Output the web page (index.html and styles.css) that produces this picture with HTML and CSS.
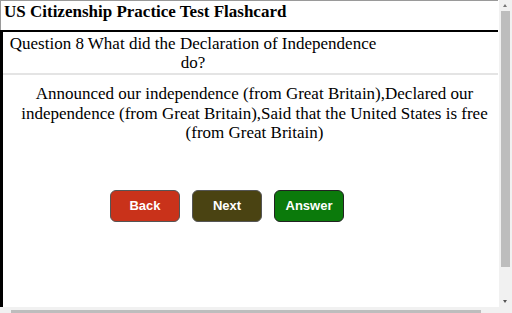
FILE: index.html
```html
<!doctype html>
<html>
<head>
<link rel="stylesheet" href="styles.css">
</head>
<body>
<div class="page">
	<div class="title">US Citizenship Practice Test Flashcard</div>
	<div class="card">
		<div class="question"><div class="qtext">Question 8 What did the Declaration of Independence do?</div></div>
		<div class="answer">Announced our independence (from Great Britain),Declared our independence (from Great Britain),Said that the United States is free (from Great Britain)</div>
		<div class="buttons">
			<button class="btn back">Back</button>
			<button class="btn next">Next</button>
			<button class="btn show">Answer</button>
		</div>
	</div>
</div>
<div class="vscroll"><div class="vthumb"></div><span class="arrow up"></span><span class="arrow down"></span></div>
<div class="hscroll"><div class="hthumb"></div></div>
</body>
</html>
```

FILE: styles.css
```css
body{
	margin:0px;
	padding:0px;
	font-family:"Liberation Serif", "Times New Roman", serif;
	background:#fff;
	overflow:hidden;
}
.page{
	width:498px;
	height:313px;
	border-top:1px solid #9a9a9a;
	box-sizing:border-box;
}
.title{
	font-weight:bold;
	font-size:17px;
	padding:1px 0 0 3px;
	height:29px;
	border-left:1px solid #9a9a9a;
	box-sizing:border-box;
}
.card{
	border-top:2px solid #000;
	border-left:3px solid #000;
	height:283px;
	box-sizing:border-box;
}
.question{
	border-bottom:2px solid #e4e4e4;
	padding:2px 0 1px 0;
}
.qtext{
	width:380px;
	text-align:center;
	font-size:17px;
	line-height:19px;
}
.answer{
	text-align:center;
	font-size:17px;
	line-height:19.5px;
	padding:9px 6px 0 14px;
}
.buttons{
	display:flex;
	gap:12px;
	padding:47px 0 0 107px;
}
.btn{
	width:70px;
	height:32px;
	border-radius:6px;
	border:1px solid #555;
	color:#fff;
	font-family:"Liberation Sans", Arial, sans-serif;
	font-weight:bold;
	font-size:13px;
	padding:0;
}
.back{
	background:#c9321a;
}
.next{
	background:#4a4312;
}
.show{
	background:#0b7a0b;
	border:1px solid #222;
}
.vscroll{
	position:fixed;
	right:0;
	top:0;
	width:13px;
	height:307px;
	background:#f1f1f1;
}
.vthumb{
	position:absolute;
	left:2px;
	right:2px;
	top:11px;
	height:256px;
	background:#bdbdbd;
}
.arrow{
	position:absolute;
	left:4px;
	width:0;
	height:0;
	border-left:2px solid transparent;
	border-right:2px solid transparent;
}
.up{
	top:4px;
	border-bottom:3px solid #777;
}
.down{
	bottom:4px;
	border-top:3px solid #555;
}
.hscroll{
	position:fixed;
	left:0;
	bottom:0;
	width:100%;
	height:6px;
	background:#f1f1f1;
}
.hthumb{
	position:absolute;
	left:11px;
	width:470px;
	top:3px;
	height:3px;
	background:#bdbdbd;
}
```
